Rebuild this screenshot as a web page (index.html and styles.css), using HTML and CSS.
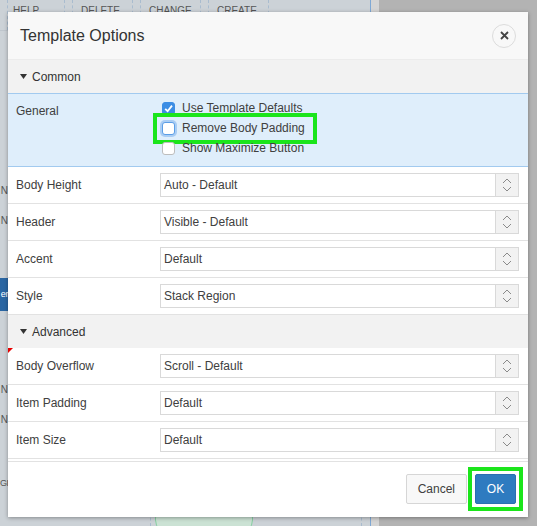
FILE: index.html
```html
<!DOCTYPE html>
<html lang="en">
<head>
<meta charset="utf-8">
<title>Template Options</title>
<link rel="stylesheet" href="styles.css">
</head>
<body>
<div class="backdrop">
  <div class="canvas">
    <div class="colheads">
      <div class="colhead first">HELP</div>
      <div class="colhead">DELETE</div>
      <div class="colhead">CHANGE</div>
      <div class="colhead">CREATE</div>
    </div>
    <div class="canvas-mid">
      <div class="sliver">
        <div class="sl sl-n1">N</div>
        <div class="sl sl-n2">N</div>
        <div class="sl sl-sel">er</div>
        <div class="sl sl-n3">N</div>
        <div class="sl sl-n4">N</div>
        <div class="sl sl-gi">GI</div>
      </div>
    </div>
    <div class="canvas-foot">
      <div class="lane"><div class="pill"></div></div>
    </div>
  </div>
  <div class="gutter"></div>
  <div class="rest"></div>
</div>

<div class="dialog">
  <div class="dlg-head">
    <h1 class="dlg-title">Template Options</h1>
    <button class="close" type="button" aria-label="Close">
      <svg width="9" height="9" viewBox="0 0 9 9"><path d="M1 1 L8 8 M8 1 L1 8" stroke="#444" stroke-width="1.8" fill="none"/></svg>
    </button>
  </div>
  <div class="dlg-body">
    <div class="group-head"><svg class="caret" width="7" height="5" viewBox="0 0 7 5"><polygon points="0,0 7,0 3.5,5" fill="#333"/></svg>Common</div>
    <div class="row row-general">
      <div class="label label-top">General</div>
      <div class="checks">
        <div class="check"><span class="box checked"><svg width="13" height="13" viewBox="0 0 13 13"><path d="M3.2 6.8 L5.6 9.2 L10 3.6" stroke="#fff" stroke-width="1.8" fill="none"/></svg></span>Use Template Defaults</div>
        <div class="check marked"><span class="box focus"></span>Remove Body Padding</div>
        <div class="check"><span class="box"></span>Show Maximize Button</div>
      </div>
    </div>
    <div class="row"><div class="label">Body Height</div><div class="select"><span class="value">Auto - Default</span><span class="arrows"><svg width="10" height="14" viewBox="0 0 10 14"><path d="M1 5 L5 1 L9 5 M1 9 L5 13 L9 9" fill="none" stroke="#8a8a8a" stroke-width="1"/></svg></span></div></div>
    <div class="row"><div class="label">Header</div><div class="select"><span class="value">Visible - Default</span><span class="arrows"><svg width="10" height="14" viewBox="0 0 10 14"><path d="M1 5 L5 1 L9 5 M1 9 L5 13 L9 9" fill="none" stroke="#8a8a8a" stroke-width="1"/></svg></span></div></div>
    <div class="row"><div class="label">Accent</div><div class="select"><span class="value">Default</span><span class="arrows"><svg width="10" height="14" viewBox="0 0 10 14"><path d="M1 5 L5 1 L9 5 M1 9 L5 13 L9 9" fill="none" stroke="#8a8a8a" stroke-width="1"/></svg></span></div></div>
    <div class="row"><div class="label">Style</div><div class="select"><span class="value">Stack Region</span><span class="arrows"><svg width="10" height="14" viewBox="0 0 10 14"><path d="M1 5 L5 1 L9 5 M1 9 L5 13 L9 9" fill="none" stroke="#8a8a8a" stroke-width="1"/></svg></span></div></div>
    <div class="group-head"><svg class="caret" width="7" height="5" viewBox="0 0 7 5"><polygon points="0,0 7,0 3.5,5" fill="#333"/></svg>Advanced</div>
    <div class="row"><span class="flag"></span><div class="label">Body Overflow</div><div class="select"><span class="value">Scroll - Default</span><span class="arrows"><svg width="10" height="14" viewBox="0 0 10 14"><path d="M1 5 L5 1 L9 5 M1 9 L5 13 L9 9" fill="none" stroke="#8a8a8a" stroke-width="1"/></svg></span></div></div>
    <div class="row"><div class="label">Item Padding</div><div class="select"><span class="value">Default</span><span class="arrows"><svg width="10" height="14" viewBox="0 0 10 14"><path d="M1 5 L5 1 L9 5 M1 9 L5 13 L9 9" fill="none" stroke="#8a8a8a" stroke-width="1"/></svg></span></div></div>
    <div class="row"><div class="label">Item Size</div><div class="select"><span class="value">Default</span><span class="arrows"><svg width="10" height="14" viewBox="0 0 10 14"><path d="M1 5 L5 1 L9 5 M1 9 L5 13 L9 9" fill="none" stroke="#8a8a8a" stroke-width="1"/></svg></span></div></div>
  </div>
  <div class="dlg-foot">
    <button class="btn" type="button">Cancel</button>
    <span class="okwrap"><button class="btn btn-primary" type="button">OK</button></span>
  </div>
</div>
</body>
</html>
```

FILE: styles.css
```css
*, *::before, *::after { box-sizing: border-box; }
html, body { margin: 0; padding: 0; }
body {
  width: 537px;
  height: 526px;
  overflow: hidden;
  position: relative;
  background: #b3b3b3;
  font-family: "Liberation Sans", Arial, Helvetica, sans-serif;
  color: #404040;
}

/* ---------- backdrop page ---------- */
.backdrop { display: flex; height: 526px; }
.canvas {
  width: 371px;
  background: #ccd2d7;
  border-right: 1px solid #7fa8d4;
  display: flex;
  flex-direction: column;
}
.colheads {
  display: flex;
  gap: 7px;
  height: 31px;
  padding-left: 7px;
  border-bottom: 1px solid #bfc6cd;
}
.colhead {
  width: 61px;
  border-left: 1px dashed #a9bccf;
  border-right: 1px dashed #a9bccf;
  font-size: 10px;
  color: #555;
  padding: 5px 0 0 8px;
}
.colhead.first { width: 58px; padding-left: 5px; }
.canvas-mid { flex: 1; }
.sliver {
  width: 8px;
  display: flex;
  flex-direction: column;
}
.sl {
  height: 12px;
  line-height: 12px;
  font-size: 10px;
  color: #555;
  text-align: right;
  white-space: nowrap;
}
.sl-n1 { margin-top: 154px; }
.sl-n2 { margin-top: 18px; }
.sl-sel {
  margin-top: 51px;
  height: 33px;
  line-height: 33px;
  background: #2a66a3;
  color: #fff;
  font-size: 9px;
  letter-spacing: -0.4px;
}
.sl-n3 { margin-top: 73px; }
.sl-n4 { margin-top: 18px; }
.sl-gi { margin-top: 51px; text-align: left; font-size: 9px; letter-spacing: -0.5px; }
.canvas-foot { height: 30px; }
.lane {
  margin-left: 150px;
  width: 212px;
  height: 30px;
  border-left: 1px dashed #a9bccf;
  border-right: 1px dashed #a9bccf;
  padding: 8px 0 0 4px;
}
.pill {
  width: 98px;
  height: 30px;
  border: 1px solid #86cfa2;
  background: #cbe2d4;
  border-radius: 14px;
}
.gutter { width: 8px; background: #d5d5d5; }
.rest { flex: 1; background: #b3b3b3; }

/* ---------- dialog ---------- */
.dialog {
  position: absolute;
  left: 8px;
  top: 12px;
  width: 520px;
  height: 505px;
  background: #fff;
  box-shadow: 0 1px 4px rgba(0, 0, 0, 0.35);
  display: flex;
  flex-direction: column;
}
.dlg-head {
  height: 48px;
  flex: none;
  background: #f8f8f8;
  border-bottom: 1px solid #ececec;
  display: flex;
  align-items: center;
  justify-content: space-between;
  padding: 0 12px;
}
.dlg-title {
  margin: 0;
  font-size: 16px;
  font-weight: normal;
  color: #333;
}
.close {
  width: 24px;
  height: 24px;
  border-radius: 50%;
  border: 1px solid #dcdcdc;
  background: #f8f8f8;
  padding: 0;
  display: flex;
  align-items: center;
  justify-content: center;
}
.dlg-body { flex: 1; overflow: hidden; }
.group-head {
  height: 33px;
  background: #f2f2f2;
  display: flex;
  align-items: center;
  padding-left: 12px;
  font-size: 12px;
  color: #333;
}
.caret { margin-right: 5px; }
.row {
  position: relative;
  height: 37px;
  border-bottom: 1px solid #e2e2e2;
  display: flex;
  align-items: center;
  padding-left: 8px;
  font-size: 12px;
}
.label { width: 144px; flex: none; color: #404040; }
.row-general {
  height: 74px;
  align-items: flex-start;
  background: #dfeefb;
  border-top: 1px solid #a2caef;
  border-bottom: 1px solid #a2caef;
}
.label-top { padding-top: 7px; line-height: 20px; }
.checks { padding: 4px 0 0 2px; }
.check {
  position: relative;
  display: flex;
  align-items: center;
  height: 20px;
  gap: 7px;
  color: #404040;
  white-space: nowrap;
}
.box {
  width: 13px;
  height: 13px;
  border-radius: 3px;
  background: #fff;
  border: 1px solid #bdbdbd;
  display: block;
  flex: none;
}
.box.checked {
  background: #3c8de4;
  border-color: #3c8de4;
  position: relative;
}
.box.checked svg { position: absolute; left: -1px; top: -1px; }
.box.focus {
  border-color: #5a9de6;
  box-shadow: 0 0 0 2px #a9cdf4;
}
.check.marked::after {
  content: "";
  position: absolute;
  left: -9px;
  top: -5px;
  width: 164px;
  height: 31px;
  border: 4px solid #1be51b;
}
.select {
  width: 359px;
  height: 24px;
  border: 1px solid #d9d9d9;
  background: #fff;
  display: flex;
  align-items: stretch;
  color: #404040;
}
.value { flex: 1; padding-left: 3px; line-height: 22px; }
.arrows {
  width: 23px;
  background: #f2f2f2;
  border-left: 1px solid #d9d9d9;
  display: flex;
  align-items: center;
  justify-content: center;
}
.flag {
  position: absolute;
  left: 0;
  top: 0;
  width: 0;
  height: 0;
  border-top: 5px solid #e80000;
  border-right: 5px solid transparent;
}
.dlg-foot {
  height: 56px;
  flex: none;
  border-top: 1px solid #e2e2e2;
  padding: 12px 12px 0 0;
  display: flex;
  justify-content: flex-end;
  align-items: flex-start;
  gap: 8px;
}
.btn {
  height: 30px;
  padding: 0 11px;
  font-family: inherit;
  font-size: 12px;
  border-radius: 2px;
  border: 1px solid #d6d6d6;
  background: #f8f8f8;
  color: #404040;
  display: block;
}
.okwrap { position: relative; display: block; }
.okwrap::after {
  content: "";
  position: absolute;
  left: -7px;
  top: -7px;
  width: 55px;
  height: 44px;
  border: 4px solid #1be51b;
}
.btn-primary {
  width: 41px;
  padding: 0;
  background: #2e7bc0;
  border-color: #2a6fb0;
  color: #fff;
}
```
